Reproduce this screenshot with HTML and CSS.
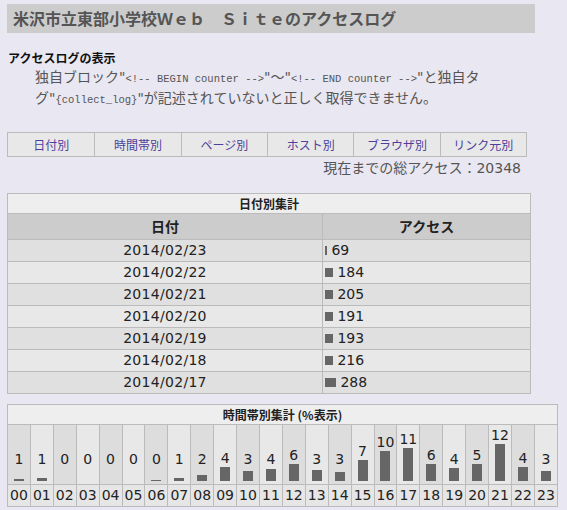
FILE: index.html
```html
<!DOCTYPE html>
<html lang="ja">
<head>
<meta charset="utf-8">
<title>アクセスログ</title>
<link rel="stylesheet" href="styles.css">
</head>
<body>
<h1 class="title">米沢市立東部小学校Ｗｅｂ　Ｓｉｔｅのアクセスログ</h1>
<h2 class="sub">アクセスログの表示</h2>
<p class="note">独自ブロック"<code>&lt;!-- BEGIN counter --&gt;</code>"〜"<code>&lt;!-- END counter --&gt;</code>"と独自タ<br>グ"<code>{collect_log}</code>"が記述されていないと正しく取得できません。</p>

<div class="nav">
  <a href="#">日付別</a>
  <a href="#">時間帯別</a>
  <a href="#">ページ別</a>
  <a href="#">ホスト別</a>
  <a href="#">ブラウザ別</a>
  <a href="#">リンク元別</a>
</div>
<div class="total">現在までの総アクセス：20348</div>

<table class="daily">
  <tr><td class="cap" colspan="2">日付別集計</td></tr>
  <tr class="head"><th class="c-date">日付</th><th>アクセス</th></tr>
  <tr class="odd"><td class="date">2014/02/23</td><td class="acc"><span class="dbar" style="width:2px"></span> 69</td></tr>
  <tr class="even"><td class="date">2014/02/22</td><td class="acc"><span class="dbar" style="width:8px"></span> 184</td></tr>
  <tr class="odd"><td class="date">2014/02/21</td><td class="acc"><span class="dbar" style="width:8px"></span> 205</td></tr>
  <tr class="even"><td class="date">2014/02/20</td><td class="acc"><span class="dbar" style="width:8px"></span> 191</td></tr>
  <tr class="odd"><td class="date">2014/02/19</td><td class="acc"><span class="dbar" style="width:8px"></span> 193</td></tr>
  <tr class="even"><td class="date">2014/02/18</td><td class="acc"><span class="dbar" style="width:8px"></span> 216</td></tr>
  <tr class="odd"><td class="date">2014/02/17</td><td class="acc"><span class="dbar" style="width:11px"></span> 288</td></tr>
</table>

<table class="hourly">
  <tr><td class="cap" colspan="24">時間帯別集計 (%表示)</td></tr>
  <tr class="bars">
    <td class="dk"><div class="hv"><span class="num">1</span><div class="hw"><span class="hb" style="height:2px"></span></div></div></td>
    <td class="lt"><div class="hv"><span class="num">1</span><div class="hw"><span class="hb" style="height:3px"></span></div></div></td>
    <td class="dk"><div class="hv"><span class="num">0</span><div class="hw"></div></div></td>
    <td class="lt"><div class="hv"><span class="num">0</span><div class="hw"></div></div></td>
    <td class="dk"><div class="hv"><span class="num">0</span><div class="hw"></div></div></td>
    <td class="lt"><div class="hv"><span class="num">0</span><div class="hw"></div></div></td>
    <td class="dk"><div class="hv"><span class="num">0</span><div class="hw"><span class="hb" style="height:1px"></span></div></div></td>
    <td class="lt"><div class="hv"><span class="num">1</span><div class="hw"><span class="hb" style="height:3px"></span></div></div></td>
    <td class="dk"><div class="hv"><span class="num">2</span><div class="hw"><span class="hb" style="height:6px"></span></div></div></td>
    <td class="lt"><div class="hv"><span class="num">4</span><div class="hw"><span class="hb" style="height:14px"></span></div></div></td>
    <td class="dk"><div class="hv"><span class="num">3</span><div class="hw"><span class="hb" style="height:10px"></span></div></div></td>
    <td class="lt"><div class="hv"><span class="num">4</span><div class="hw"><span class="hb" style="height:12px"></span></div></div></td>
    <td class="dk"><div class="hv"><span class="num">6</span><div class="hw"><span class="hb" style="height:17px"></span></div></div></td>
    <td class="lt"><div class="hv"><span class="num">3</span><div class="hw"><span class="hb" style="height:11px"></span></div></div></td>
    <td class="dk"><div class="hv"><span class="num">3</span><div class="hw"><span class="hb" style="height:9px"></span></div></div></td>
    <td class="lt"><div class="hv"><span class="num">7</span><div class="hw"><span class="hb" style="height:21px"></span></div></div></td>
    <td class="dk"><div class="hv"><span class="num">10</span><div class="hw"><span class="hb" style="height:30px"></span></div></div></td>
    <td class="lt"><div class="hv"><span class="num">11</span><div class="hw"><span class="hb" style="height:33px"></span></div></div></td>
    <td class="dk"><div class="hv"><span class="num">6</span><div class="hw"><span class="hb" style="height:17px"></span></div></div></td>
    <td class="lt"><div class="hv"><span class="num">4</span><div class="hw"><span class="hb" style="height:13px"></span></div></div></td>
    <td class="dk"><div class="hv"><span class="num">5</span><div class="hw"><span class="hb" style="height:17px"></span></div></div></td>
    <td class="lt"><div class="hv"><span class="num">12</span><div class="hw"><span class="hb" style="height:37px"></span></div></div></td>
    <td class="dk"><div class="hv"><span class="num">4</span><div class="hw"><span class="hb" style="height:14px"></span></div></div></td>
    <td class="lt"><div class="hv"><span class="num">3</span><div class="hw"><span class="hb" style="height:10px"></span></div></div></td>
  </tr>
  <tr class="labels">
    <td>00</td><td>01</td><td>02</td><td>03</td><td>04</td><td>05</td>
    <td>06</td><td>07</td><td>08</td><td>09</td><td>10</td><td>11</td>
    <td>12</td><td>13</td><td>14</td><td>15</td><td>16</td><td>17</td>
    <td>18</td><td>19</td><td>20</td><td>21</td><td>22</td><td>23</td>
  </tr>
</table>
</body>
</html>
```

FILE: styles.css
```css
html, body {
  margin: 0;
  padding: 0;
}
body {
  background: #e9e7f1;
  font-family: "DejaVu Sans", "Noto Sans CJK JP", sans-serif;
  color: #222;
  padding: 4px 0 0 7px;
}
.title {
  margin: 0;
  width: 522px;
  height: 29px;
  padding-left: 6px;
  background: #cccccc;
  color: #555;
  font-family: "Noto Sans CJK JP", sans-serif;
  font-size: 16px;
  font-weight: bold;
  line-height: 29px;
}
.sub {
  margin: 17px 0 0 1px;
  font-family: "Noto Sans CJK JP", sans-serif;
  font-size: 12px;
  font-weight: bold;
  line-height: 16px;
  color: #111;
}
.note {
  margin: 1px 0 0 28px;
  font-family: "DejaVu Sans", "Noto Sans CJK JP", sans-serif;
  font-size: 14px;
  line-height: 21px;
  height: 42px;
  color: #555;
}
.note code {
  font-family: "Liberation Mono", monospace;
  font-size: 10.5px;
  line-height: 10px;
  color: #555;
}
.nav {
  margin-top: 23px;
  width: 520px;
  display: grid;
  grid-template-columns: repeat(6, 1fr);
  border: 1px solid #bbb;
  box-sizing: border-box;
  background: #e8e8e8;
}
.nav a {
  display: block;
  text-align: center;
  height: 23px;
  line-height: 23px;
  font-family: "Noto Sans CJK JP", sans-serif;
  font-size: 12px;
  color: #4e3f9c;
  text-decoration: none;
  border-left: 1px solid #bbb;
}
.nav a:first-child {
  border-left: none;
}
.total {
  width: 514px;
  text-align: right;
  font-size: 14px;
  line-height: 20px;
  margin-top: 1px;
  color: #555;
}
table {
  border-collapse: collapse;
  border: 1px solid #bbb;
}
td, th {
  border: 1px solid #bbb;
  padding: 0;
}
.daily {
  margin-top: 15px;
  width: 524px;
}
.cap {
  background: #eeeeee;
  text-align: center;
  font-family: "Noto Sans CJK JP", sans-serif;
  font-size: 12px;
  font-weight: bold;
  height: 19px;
  line-height: 19px;
  color: #222;
}
.head th {
  background: #cccccc;
  font-family: "Noto Sans CJK JP", sans-serif;
  font-size: 14px;
  font-weight: bold;
  height: 25px;
  line-height: 25px;
  color: #222;
}
.c-date {
  width: 314px;
}
.daily .odd td {
  background: #e0e0e0;
}
.daily .even td {
  background: #e8e8e8;
}
.date {
  text-align: center;
  font-size: 14px;
  line-height: 21px;
  height: 21px;
  letter-spacing: 0.3px;
}
.acc {
  font-size: 14px;
  line-height: 21px;
  height: 21px;
  padding-left: 2px;
}
.dbar {
  display: inline-block;
  height: 9px;
  background: #666;
}
.hourly {
  margin-top: 10px;
  width: 551px;
  table-layout: fixed;
}
.bars td {
  height: 59px;
  vertical-align: bottom;
}
.bars td.dk {
  background: #dddddd;
}
.bars td.lt {
  background: #e8e8e8;
}
.hv {
  display: flex;
  flex-direction: column;
  align-items: center;
  padding-bottom: 3px;
}
.num {
  font-size: 14px;
  line-height: 17px;
  color: #222;
}
.hw {
  min-height: 13px;
  display: flex;
  align-items: flex-end;
}
.hb {
  display: block;
  width: 10px;
  background: #666;
}
.labels td {
  background: #e6e6e6;
  text-align: center;
  font-size: 14px;
  line-height: 21px;
  height: 21px;
  color: #222;
}
```
